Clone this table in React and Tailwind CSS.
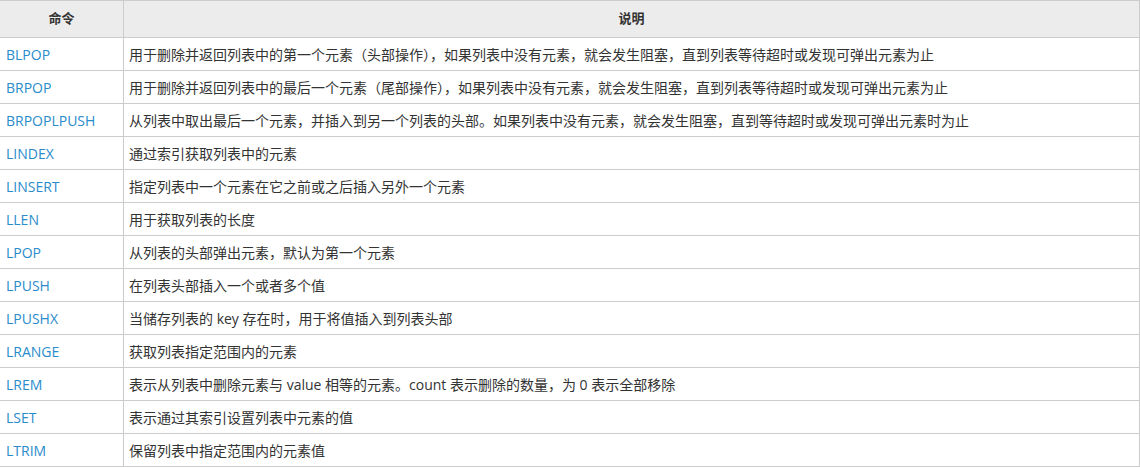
import React from "react";

const ROWS = [
  ["BLPOP", "用于删除并返回列表中的第一个元素（头部操作），如果列表中没有元素，就会发生阻塞，直到列表等待超时或发现可弹出元素为止"],
  ["BRPOP", "用于删除并返回列表中的最后一个元素（尾部操作），如果列表中没有元素，就会发生阻塞，直到列表等待超时或发现可弹出元素为止"],
  ["BRPOPLPUSH", "从列表中取出最后一个元素，并插入到另一个列表的头部。如果列表中没有元素，就会发生阻塞，直到等待超时或发现可弹出元素时为止"],
  ["LINDEX", "通过索引获取列表中的元素"],
  ["LINSERT", "指定列表中一个元素在它之前或之后插入另外一个元素"],
  ["LLEN", "用于获取列表的长度"],
  ["LPOP", "从列表的头部弹出元素，默认为第一个元素"],
  ["LPUSH", "在列表头部插入一个或者多个值"],
  ["LPUSHX", "当储存列表的 key 存在时，用于将值插入到列表头部"],
  ["LRANGE", "获取列表指定范围内的元素"],
  ["LREM", "表示从列表中删除元素与 value 相等的元素。count 表示删除的数量，为 0 表示全部移除"],
  ["LSET", "表示通过其索引设置列表中元素的值"],
  ["LTRIM", "保留列表中指定范围内的元素值"],
];

export default function App() {
  return (
    <div
      className="w-[1140px] h-[468px] bg-white overflow-hidden text-[13px] text-[#333]"
      style={{ fontFamily: '"Open Sans", "Noto Sans CJK SC", sans-serif' }}
    >
      <table className="border-collapse -ml-px w-[1141px] table-fixed">
        <colgroup>
          <col className="w-[124px]" />
          <col />
        </colgroup>
        <thead>
          <tr className="h-[37px] bg-[#ececec]">
            <th className="border border-[#cccccc] font-bold text-center">命令</th>
            <th className="border border-[#cccccc] font-bold text-center">说明</th>
          </tr>
        </thead>
        <tbody>
          {ROWS.map(([cmd, desc]) => (
            <tr key={cmd} className="h-[33px]">
              <td className="border border-[#cccccc] pl-[6px] text-[14px] text-[#2a8bcb]">{cmd}</td>
              <td className="border border-[#cccccc] pl-[5px] text-[14px] whitespace-nowrap">{desc}</td>
            </tr>
          ))}
        </tbody>
      </table>
    </div>
  );
}
